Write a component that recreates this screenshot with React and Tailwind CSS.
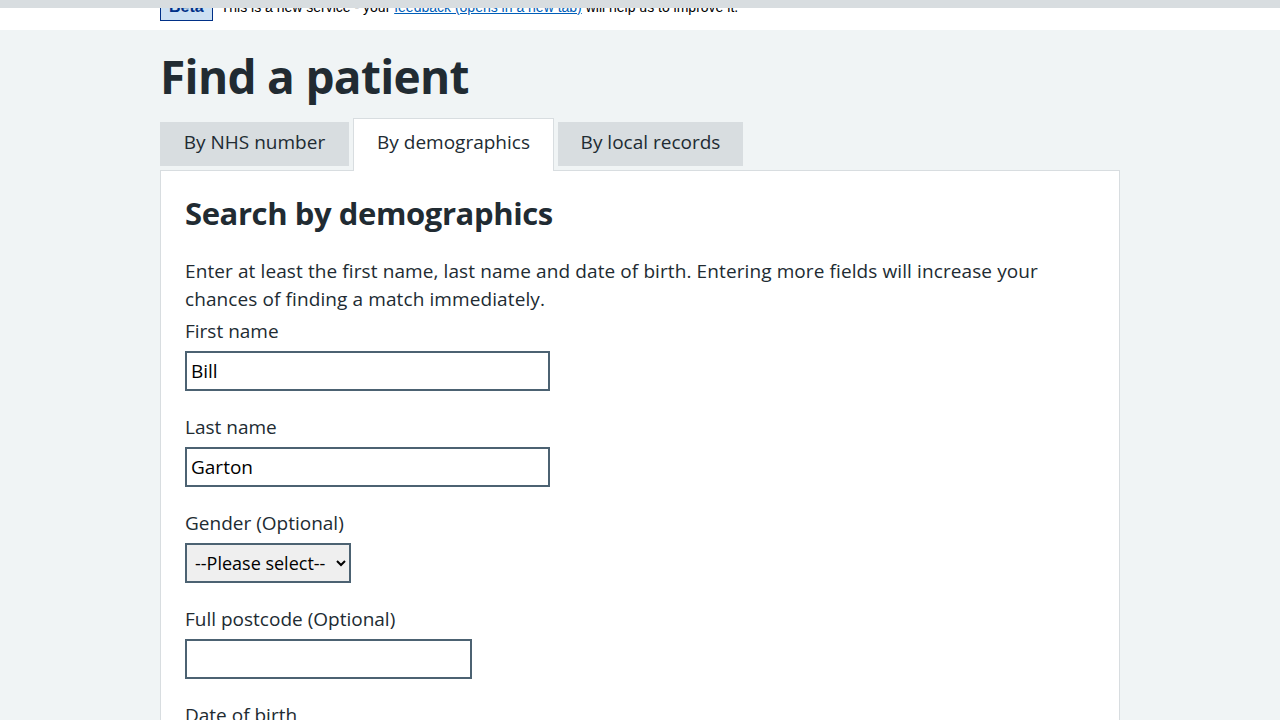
const font = { fontFamily: '"Open Sans", "Liberation Sans", sans-serif' };

function Field({ label, value, width }) {
  return (
    <div className="mb-[22px]">
      <label className="block text-[19px] leading-7 text-[#212b32] mb-1.5">{label}</label>
      <input
        type="text"
        defaultValue={value}
        className={`${width} h-10 border-2 border-[#4c6272] bg-white px-1 text-[19px] text-black outline-none`}
      />
    </div>
  );
}

export default function App() {
  return (
    <div className="min-h-[720px] bg-[#f0f4f5] text-[#212b32]" style={font}>
      <div className="fixed top-0 left-0 right-0 h-2 bg-[#d8dde0] z-10" />
      <div className="bg-white h-[30px] overflow-hidden">
        <div className="mx-auto w-[960px] flex items-end h-[20px] gap-2 font-['Liberation_Sans',Arial,sans-serif]">
          <span className="border border-[#003087] bg-[#cce0f2] text-[#003087] font-bold text-[16px] leading-[26px] h-[28px] px-2 -mb-px self-end">Beta</span>
          <p className="text-[14px] leading-5 text-black pb-[3px]">
            This is a new service - your{" "}
            <a href="#" className="text-[#005eb8] underline">feedback (opens in a new tab)</a>{" "}
            will help us to improve it.
          </p>
        </div>
      </div>
      <div className="mx-auto w-[960px]">
        <h1 className="text-[46px] font-bold leading-[56px] tracking-[-0.7px] pt-[18px] mb-[14px]">Find a patient</h1>
        <div className="flex items-end gap-1 h-[53px] relative z-[1]">
          <div className="w-[189px] h-11 mb-[5px] bg-[#d8dde0] flex items-center justify-center text-[19px] pb-1">By NHS number</div>
          <div className="w-[201px] h-[53px] bg-white border border-[#d8dde0] border-b-0 flex items-center justify-center text-[19px] pb-[5px]">By demographics</div>
          <div className="w-[185px] h-11 mb-[5px] bg-[#d8dde0] flex items-center justify-center text-[19px] pb-1">By local records</div>
        </div>
        <div className="-mt-px bg-white border border-[#d8dde0] px-6 pt-[22px] pb-8">
          <h2 className="text-[31px] font-bold leading-10 tracking-[-0.4px] mb-[24px]">Search by demographics</h2>
          <p className="text-[19px] leading-7 tracking-[0.1px] mb-1">
            Enter at least the first name, last name and date of birth. Entering more fields will increase your chances of finding a match immediately.
          </p>
          <Field label="First name" value="Bill" width="w-[365px]" />
          <Field label="Last name" value="Garton" width="w-[365px]" />
          <div className="mb-[22px]">
            <label className="block text-[19px] leading-7 mb-1.5">Gender (Optional)</label>
            <select className="h-10 w-[166px] border-2 border-[#4c6272] bg-[#efefef] text-[18px] text-black pl-1">
              <option>--Please select--</option>
              <option>Male</option>
              <option>Female</option>
            </select>
          </div>
          <Field label="Full postcode (Optional)" value="" width="w-[287px]" />
          <label className="block text-[19px] leading-7 mb-1.5">Date of birth</label>
          <div className="h-24" />
        </div>
      </div>
    </div>
  );
}
